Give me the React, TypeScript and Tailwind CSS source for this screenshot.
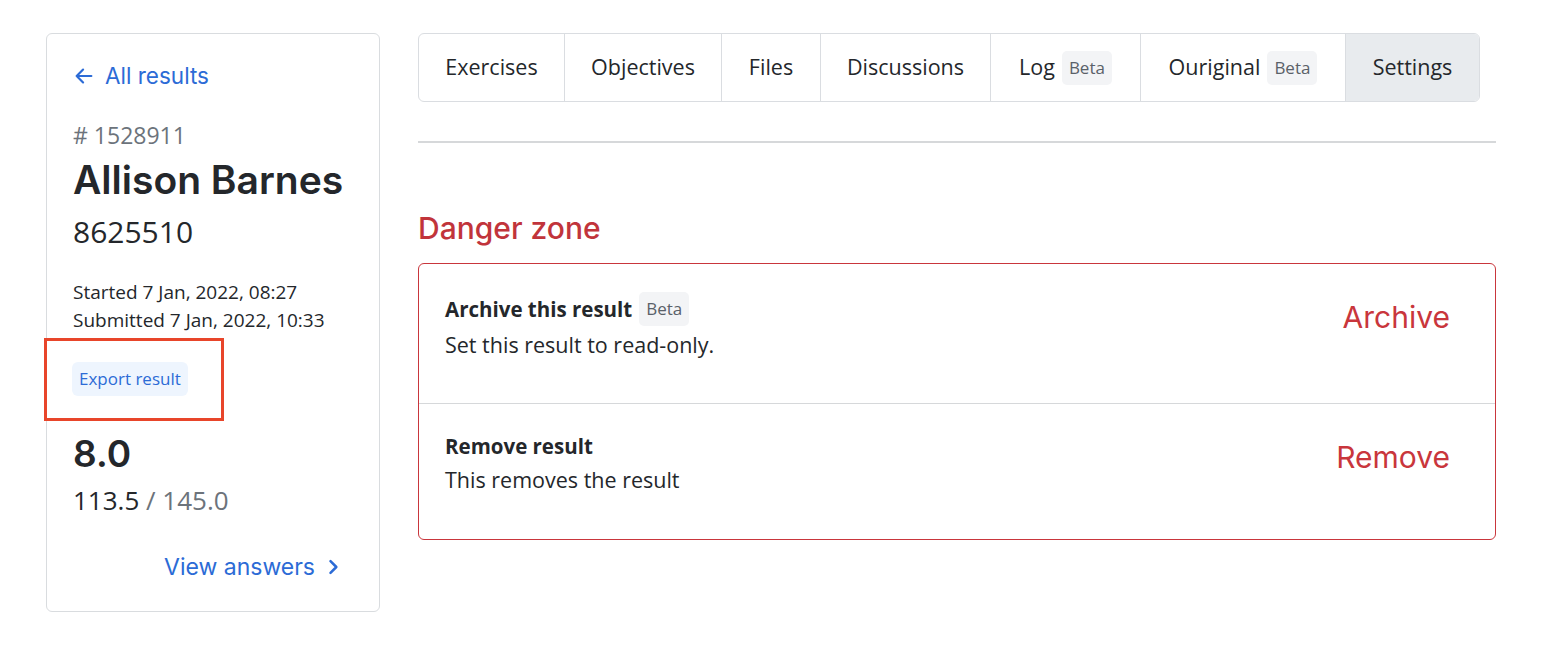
import React from "react";

const body = { fontFamily: "'Open Sans', 'Noto Sans', sans-serif" };
const head = { fontFamily: "Inter, 'Noto Sans', sans-serif" };

function Beta() {
  return (
    <span className="ml-[7px] inline-flex h-[34px] items-center rounded-[5px] bg-[#f3f4f6] px-[7px] text-[17px] font-normal text-[#5a6169]">
      Beta
    </span>
  );
}

function Tab({ children, active, last, w }: { children: React.ReactNode; active?: boolean; last?: boolean; w: string }) {
  return (
    <div
      className={
        "flex items-center justify-center text-[21.5px] text-[#24272b] " +
        w +
        " " +
        (active ? "bg-[#e8ebee] " : "") +
        (last ? "" : "border-r border-[#dadde1] ")
      }
    >
      {children}
    </div>
  );
}

export default function App() {
  return (
    <div className="flex min-h-[650px] w-[1564px] items-start gap-[38px] bg-white pl-[46px] pt-[33px]" style={body}>
      {/* Left card */}
      <div className="relative flex h-[579px] w-[334px] flex-col rounded-[6px] border border-[#d9dcdf] px-[26px] pt-[26px]">
        <a className="flex items-center gap-[10px] text-[22.5px] leading-[32px] text-[#2c6bd6]" style={head}>
          <svg width="22" height="22" viewBox="0 0 24 24" fill="none" stroke="currentColor" strokeWidth="2.4" strokeLinecap="round" strokeLinejoin="round">
            <path d="M20 12H4M11 5l-7 7 7 7" />
          </svg>
          All results
        </a>
        <div className="mt-[28px] text-[23px] leading-[30px] text-[#6c737b]">#&nbsp;1528911</div>
        <div className="mt-[6px] text-[39px] font-semibold leading-[48px] text-[#24272b]" style={head}>Allison Barnes</div>
        <div className="mt-[8px] text-[30px] leading-[40px] text-[#24272b]">8625510</div>
        <div className="mt-[26px] text-[19px] leading-[28px] text-[#24272b]">Started 7 Jan, 2022, 08:27</div>
        <div className="text-[19px] leading-[28px] text-[#24272b]">Submitted 7 Jan, 2022, 10:33</div>
        <div className="mt-[28px] flex">
          <span className="ml-[-1px] inline-flex h-[34px] items-center rounded-[6px] bg-[#eef5fe] px-[7px] text-[17px] text-[#2c6bd6]">Export result</span>
        </div>
        <div className="absolute left-[-3px] top-[304px] h-[83px] w-[180px] border-[3px] border-[#e8452a]" />
        <div className="mt-[36px] text-[37px] font-semibold leading-[44px] text-[#24272b]" style={head}>8.0</div>
        <div className="mt-[7px] text-[26px] leading-[34px] text-[#24272b]">
          113.5 <span className="text-[#6c737b]">/ 145.0</span>
        </div>
        <div className="mt-[33px] flex items-center justify-end gap-[8px] pr-[10px] text-[23px] leading-[34px] text-[#2c6bd6]" style={head}>
          View answers
          <svg width="20" height="20" viewBox="0 0 24 24" fill="none" stroke="currentColor" strokeWidth="3" strokeLinecap="round" strokeLinejoin="round">
            <path d="M9 5l7 7-7 7" />
          </svg>
        </div>
      </div>

      {/* Right */}
      <div className="flex w-[1078px] flex-col">
        <div className="flex h-[69px] w-[1062px] overflow-hidden rounded-[6px] border border-[#dadde1]">
          <Tab w="w-[146px]">Exercises</Tab>
          <Tab w="w-[157px]">Objectives</Tab>
          <Tab w="w-[99px]">Files</Tab>
          <Tab w="w-[170px]">Discussions</Tab>
          <Tab w="w-[150px]">Log<Beta /></Tab>
          <Tab w="w-[205px]">Ouriginal<Beta /></Tab>
          <Tab w="flex-1" active last>Settings</Tab>
        </div>
        <div className="mt-[39px] h-[2px] w-full bg-[#d6d8da]" />
        <div className="mt-[67px] text-[30px] font-medium leading-[36px] text-[#c1343b]" style={head}>Danger zone</div>
        <div className="mt-[17px] flex flex-col rounded-[6px] border border-[#c9363c]">
          <div className="flex h-[140px] items-start justify-between border-b border-[#d6d8da] px-[26px] pt-[28px]">
            <div>
              <div className="flex items-center text-[20.5px] font-bold text-[#24272b]">
                Archive this result<Beta />
              </div>
              <div className="mt-[3px] text-[21.5px] text-[#24272b]">Set this result to read-only.</div>
            </div>
            <div className="mr-[19px] mt-[3px] text-[30px] text-[#c9363c]" style={head}>Archive</div>
          </div>
          <div className="flex h-[135px] items-start justify-between px-[26px] pt-[27px]">
            <div>
              <div className="text-[20.5px] font-bold leading-[30px] text-[#24272b]">Remove result</div>
              <div className="mt-[3px] text-[21.5px] text-[#24272b]">This removes the result</div>
            </div>
            <div className="mr-[19px] mt-[4px] text-[30px] text-[#c9363c]" style={head}>Remove</div>
          </div>
        </div>
      </div>
    </div>
  );
}
